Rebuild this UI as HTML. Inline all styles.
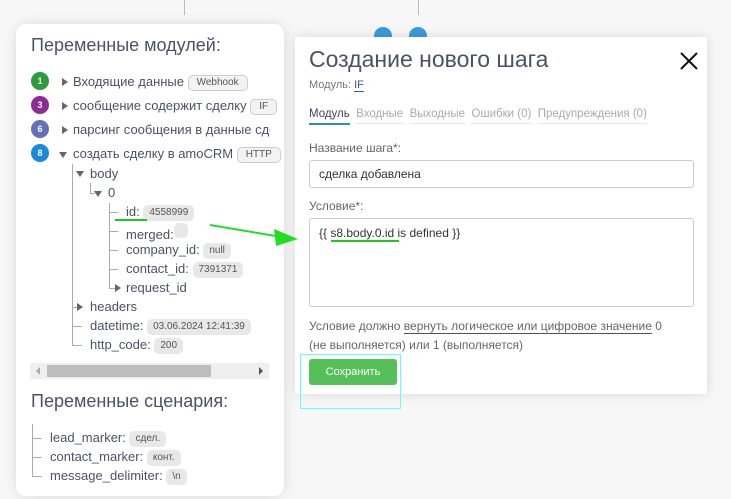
<!DOCTYPE html>
<html><head><meta charset="utf-8"><style>
*{margin:0;padding:0;box-sizing:border-box}
body{width:731px;height:499px;background:#f7f7f7;font-family:"Liberation Sans","Noto Sans CJK SC",sans-serif;color:#4a5060;position:relative;overflow:hidden}
.a{position:absolute;white-space:nowrap}
.panel{position:absolute;left:16px;top:24px;width:268px;height:472px;background:#fff;border-radius:10px;box-shadow:0 0 12px rgba(0,0,0,.12)}
.t{font-size:13px;color:#4a5268}
.tag{display:inline-block;background:#e8e8e8;border-radius:5px;font-size:10px;padding:1px 6px;color:#555;vertical-align:1px;line-height:14px}
.tagb{border:1px solid #ccc;background:#f3f3f3;padding:0 8px}
.c{position:absolute;width:18px;height:18px;border-radius:50%;color:#fff;font-size:9px;font-weight:bold;text-align:center;line-height:18px}
.tri{position:absolute;width:0;height:0}
.tr{border-top:4px solid transparent;border-bottom:4px solid transparent;border-left:6px solid #666}
.td{border-left:4px solid transparent;border-right:4px solid transparent;border-top:6px solid #666}
.vl{position:absolute;width:1px;background:#aaa}
.hl{position:absolute;height:1px;background:#aaa}
.modal{position:absolute;left:295px;top:37px;width:412px;height:357px;background:#fff;box-shadow:0 0 12px rgba(0,0,0,.12)}
.inp{position:absolute;border:1px solid #ccc;border-radius:3px;background:#fff}
</style></head><body>
<div class="vl" style="left:184px;top:0;height:15px;background:#bbb"></div>
<div class="vl" style="left:418px;top:0;height:15px;background:#bbb"></div>
<div class="c" style="left:374px;top:27px;background:#3a9be0"></div>
<div class="c" style="left:409px;top:27px;background:#3a9be0"></div>

<div class="panel"></div>
<div class="a" style="left:31px;top:35px;font-size:18px;color:#4a5268">Переменные модулей:</div>

<div class="c" style="left:31px;top:72px;background:#2e9a3e">1</div>
<div class="tri tr" style="left:62px;top:78px"></div>
<div class="a t" style="left:73px;top:74px">Входящие данные <span class="tag tagb">Webhook</span></div>
<div class="c" style="left:31px;top:96px;background:#8e2a96">3</div>
<div class="tri tr" style="left:62px;top:102px"></div>
<div class="a t" style="left:73px;top:98px">сообщение содержит сделку <span class="tag tagb">IF</span></div>
<div class="c" style="left:31px;top:120px;background:#6470b8">6</div>
<div class="tri tr" style="left:62px;top:126px"></div>
<div class="a t" style="left:73px;top:122px;width:197px;overflow:hidden">парсинг сообщения в данные сделки</div>
<div class="c" style="left:31px;top:144px;background:#1a8ad8">8</div>
<div class="tri td" style="left:59px;top:152px"></div>
<div class="a t" style="left:73px;top:146px">создать сделку в amoCRM <span class="tag tagb">HTTP</span></div>

<div class="vl" style="left:72px;top:164px;height:182px"></div>
<div class="tri td" style="left:76px;top:171px"></div>
<div class="a t" style="left:90px;top:166px">body</div>
<div class="vl" style="left:90px;top:183px;height:10px"></div>
<div class="hl" style="left:90px;top:193px;width:5px"></div>
<div class="tri td" style="left:94px;top:191px"></div>
<div class="a t" style="left:108px;top:185px">0</div>
<div class="vl" style="left:109px;top:203px;height:86px"></div>
<div class="hl" style="left:110px;top:212px;width:8px"></div>
<div class="a t" style="left:126px;top:204px">id: <span class="tag">4558999</span></div>
<div class="a" style="left:115px;top:219px;width:32px;height:2px;background:#1ec81e"></div>
<div class="hl" style="left:110px;top:231px;width:8px"></div>
<div class="a t" style="left:126px;top:223px">merged:<span class="tag" style="width:14px;height:15px;padding:0"></span></div>
<div class="hl" style="left:110px;top:250px;width:8px"></div>
<div class="a t" style="left:126px;top:242px">company_id: <span class="tag">null</span></div>
<div class="hl" style="left:110px;top:269px;width:8px"></div>
<div class="a t" style="left:126px;top:261px">contact_id: <span class="tag">7391371</span></div>
<div class="hl" style="left:110px;top:288px;width:5px"></div>
<div class="tri tr" style="left:115px;top:284px"></div>
<div class="a t" style="left:126px;top:280px">request_id</div>
<div class="hl" style="left:72px;top:307px;width:5px"></div>
<div class="tri tr" style="left:77px;top:303px"></div>
<div class="a t" style="left:90px;top:299px">headers</div>
<div class="hl" style="left:72px;top:326px;width:10px"></div>
<div class="a t" style="left:90px;top:318px">datetime: <span class="tag">03.06.2024 12:41:39</span></div>
<div class="hl" style="left:72px;top:345px;width:10px"></div>
<div class="a t" style="left:90px;top:337px">http_code: <span class="tag">200</span></div>

<div class="a" style="left:30px;top:363px;width:239px;height:16px;background:#efefef"></div>
<div class="a" style="left:47px;top:365px;width:164px;height:12px;background:#bdbdbd"></div>
<div class="tri" style="left:36px;top:367px;border-top:4px solid transparent;border-bottom:4px solid transparent;border-right:4px solid #aaa"></div>
<div class="tri" style="left:259px;top:367px;border-top:4px solid transparent;border-bottom:4px solid transparent;border-left:4px solid #555"></div>

<div class="a" style="left:31px;top:391px;font-size:18px;color:#4a5268">Переменные сценария:</div>
<div class="vl" style="left:32px;top:424px;height:52px"></div>
<div class="hl" style="left:32px;top:438px;width:10px"></div>
<div class="hl" style="left:32px;top:457px;width:10px"></div>
<div class="hl" style="left:32px;top:476px;width:10px"></div>
<div class="a t" style="left:50px;top:430px">lead_marker: <span class="tag">сдел.</span></div>
<div class="a t" style="left:50px;top:449px">contact_marker: <span class="tag">конт.</span></div>
<div class="a t" style="left:50px;top:468px">message_delimiter: <span class="tag">\n</span></div>

<div class="modal"></div>
<div class="a" style="left:309px;top:46px;font-size:23px;color:#4a5268">Создание нового шага</div>
<svg class="a" style="left:680px;top:52px" width="18" height="18"><path d="M1 1L17 17M17 1L1 17" stroke="#111" stroke-width="2"/></svg>
<div class="a" style="left:309px;top:79px;font-size:11px;color:#777">Модуль: <span style="color:#3a5a8a;border-bottom:1px solid #3a5a8a">IF</span></div>
<div class="a" style="left:309px;top:108px;font-size:11.5px;color:#aaa">
<span style="color:#4a3a6a;border-bottom:2px solid #2a8ad8;padding-bottom:3px">Модуль</span>&nbsp; <span style="border-bottom:1px solid #e4e4e4;padding-bottom:3px">Входные</span>&nbsp; <span style="border-bottom:1px solid #e4e4e4;padding-bottom:3px">Выходные</span>&nbsp; <span style="border-bottom:1px solid #e4e4e4;padding-bottom:3px">Ошибки (0)</span>&nbsp; <span style="border-bottom:1px solid #e4e4e4;padding-bottom:3px">Предупреждения (0)</span></div>
<div class="a" style="left:309px;top:141px;font-size:12px;color:#666">Название шага*:</div>
<div class="inp" style="left:309px;top:160px;width:385px;height:28px"></div>
<div class="a" style="left:319px;top:167px;font-size:12px;color:#333">сделка добавлена</div>
<div class="a" style="left:309px;top:199px;font-size:12px;color:#666">Условие*:</div>
<div class="inp" style="left:309px;top:218px;width:385px;height:89px"></div>
<div class="a" style="left:319px;top:226px;font-size:12px;color:#333">{{ s8.body.0.id is defined }}</div>
<div class="a" style="left:331px;top:240px;width:68px;height:2px;background:#1ec81e"></div>
<div class="a" style="left:309px;top:317px;font-size:12px;color:#666;line-height:19px">Условие должно <span style="border-bottom:1px solid #4a5268">вернуть логическое или цифровое значение</span> 0<br>(не выполняется) или 1 (выполняется)</div>
<div class="a" style="left:309px;top:359px;width:88px;height:26px;background:#55bf5a;border-radius:3px;color:#fff;font-size:11px;text-align:center;line-height:26px">Сохранить</div>
<div class="a" style="left:300px;top:354px;width:101px;height:55px;border:1px solid #6ff"></div>

<svg class="a" style="left:0;top:0" width="731" height="499"><path d="M210 225L288 238" stroke="#22dd22" stroke-width="2"/><path d="M298 239L274 229L276 246Z" fill="#22dd22"/></svg>
</body></html>
